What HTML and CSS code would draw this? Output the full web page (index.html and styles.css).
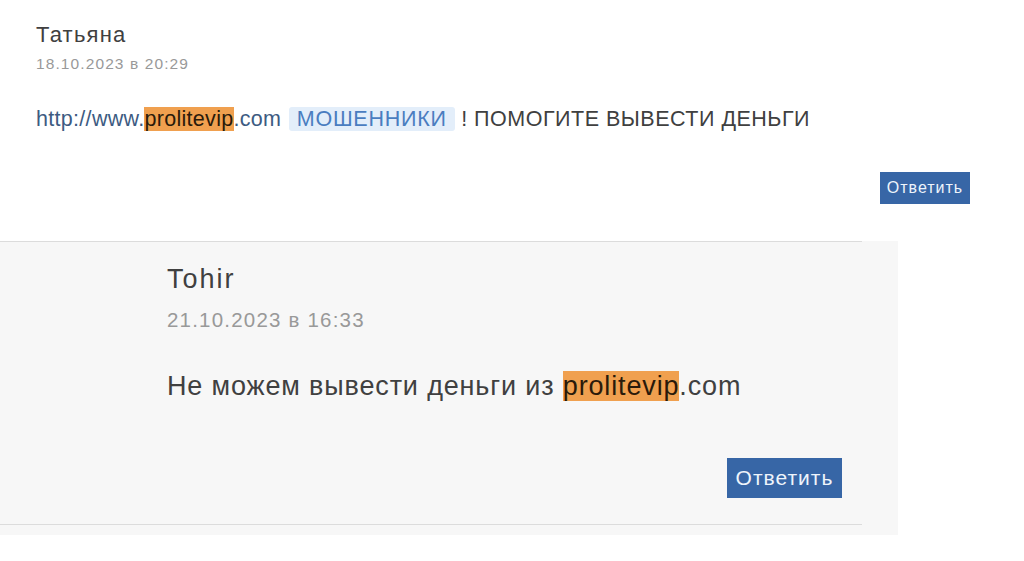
FILE: index.html
```html
<!DOCTYPE html>
<html lang="ru">
  <head>
    <meta charset="UTF-8" />
    <meta name="viewport" content="width=device-width, initial-scale=1.0" />
    <title>Комментарии</title>
    <link rel="stylesheet" href="styles.css">
  </head>
  <body>
    <div class="comment">
      <div class="comment-author">Татьяна</div>
      <div class="comment-date">18.10.2023 в 20:29</div>
      <p class="comment-text">
        <a class="link" href="#">http://www.<mark class="hl">prolitevip</mark>.com</a>
        <span class="tag">МОШЕННИКИ</span> ! ПОМОГИТЕ ВЫВЕСТИ ДЕНЬГИ
      </p>
      <div class="comment-actions">
        <button class="reply-button">Ответить</button>
      </div>
    </div>

    <div class="reply-panel">
      <div class="reply">
        <div class="comment-author">Tohir</div>
        <div class="comment-date">21.10.2023 в 16:33</div>
        <p class="comment-text">Не можем вывести деньги из <mark class="hl">prolitevip</mark>.com</p>
        <div class="comment-actions">
          <button class="reply-button">Ответить</button>
        </div>
      </div>
    </div>
  </body>
</html>
```

FILE: styles.css
```css
/* Base Styles */
* {
  box-sizing: border-box;
  margin: 0;
  padding: 0;
}
body {
  font-family: "Liberation Sans", Arial, sans-serif;
  background: #fff;
  color: #404040;
}

/* Top comment */
.comment {
  padding: 23px 54px 37px 36px;
}
.comment-author {
  font-size: 22px;
  line-height: 24px;
  color: #404040;
  letter-spacing: 1.2px;
}
.comment-date {
  margin-top: 7px;
  font-size: 15.5px;
  line-height: 20px;
  color: #999;
  letter-spacing: 1.1px;
}
.comment-text {
  margin-top: 32px;
  font-size: 21.5px;
  line-height: 26px;
  color: #404040;
  letter-spacing: 0.5px;
}
.link {
  color: #3d5b82;
  text-decoration: none;
  letter-spacing: 0.3px;
}
.hl {
  background: #f0a04f;
  color: #2a1a0a;
}
.tag {
  background: #e3eefa;
  color: #4a7dc0;
  padding: 0 8px;
  margin-left: 1px;
  border-radius: 3px;
  letter-spacing: 0.75px;
}
.comment-actions {
  display: flex;
  justify-content: flex-end;
  margin-top: 40px;
}
.reply-button {
  height: 32px;
  width: 90px;
  background: #3766a6;
  color: #eef4fb;
  border: none;
  font-family: "Liberation Sans", Arial, sans-serif;
  font-size: 16px;
  letter-spacing: 1px;
  cursor: pointer;
}
.reply-button:hover {
  background: #1d3f70;
}

/* Nested reply */
.reply-panel {
  width: 898px;
  background: #f7f7f7;
  padding: 0 36px 10px 0;
}
.reply {
  border-top: 1px solid #dcdcdc;
  border-bottom: 1px solid #dcdcdc;
  padding: 21px 20px 26px 167px;
}
.reply .comment-author {
  font-size: 27px;
  line-height: 32px;
  letter-spacing: 2px;
}
.reply .comment-date {
  margin-top: 13px;
  font-size: 20.5px;
  line-height: 24px;
  letter-spacing: 1.2px;
}
.reply .comment-text {
  margin-top: 38px;
  font-size: 27px;
  line-height: 32px;
  letter-spacing: 0.85px;
}
.reply .comment-actions {
  margin-top: 56px;
}
.reply .reply-button {
  height: 40px;
  width: 115px;
  font-size: 21px;
  letter-spacing: 1px;
}
```
